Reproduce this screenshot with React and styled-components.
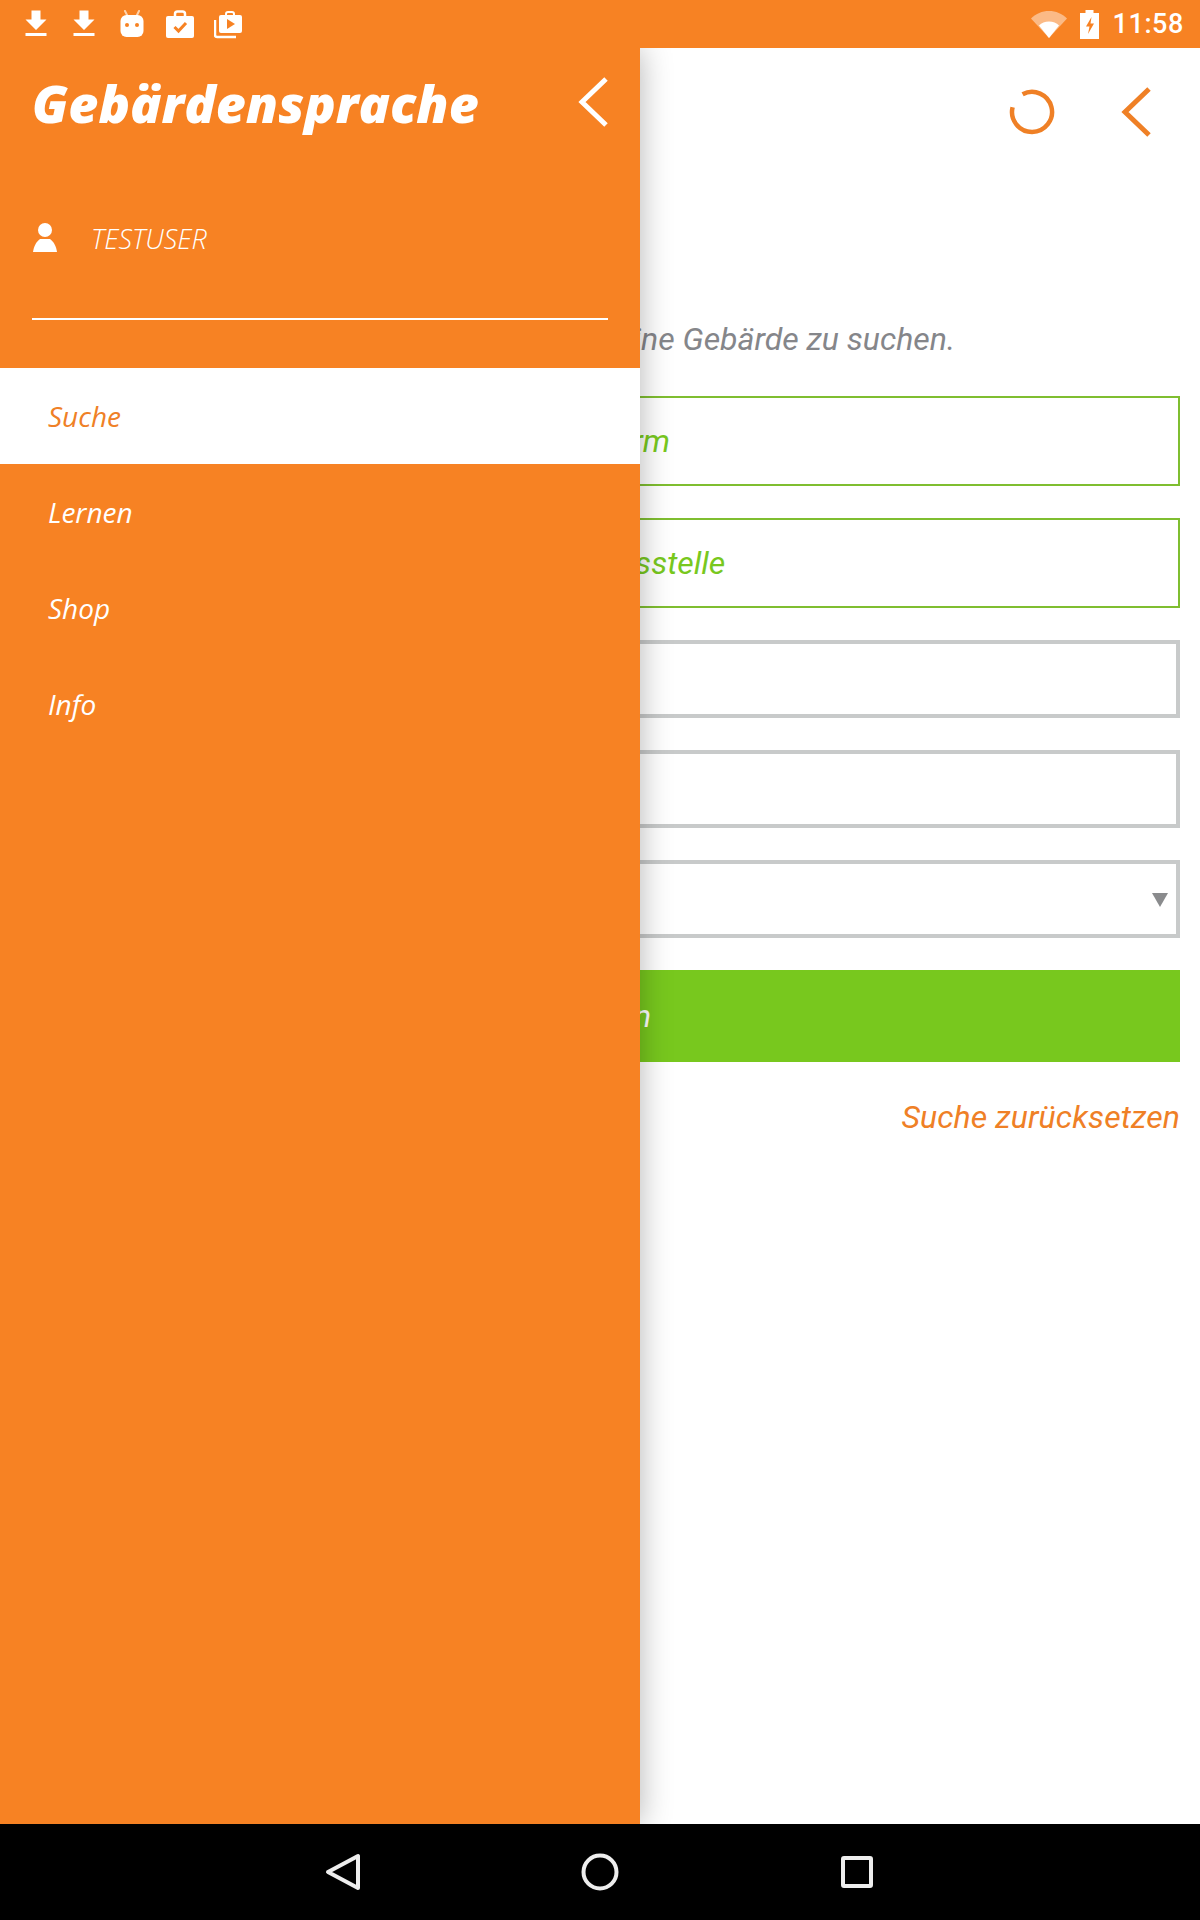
import React from "react";
import styled, { createGlobalStyle } from "styled-components";

const ORANGE = "#f78223";
const GREEN = "#78c81e";

const GlobalStyle = createGlobalStyle`
  html, body {
    margin: 0;
    padding: 0;
    background: #fff;
  }
  * {
    box-sizing: border-box;
  }
`;

const Page = styled.div`
  width: 1200px;
  height: 1920px;
  display: flex;
  flex-direction: column;
  overflow: hidden;
  font-family: "Roboto", sans-serif;
`;

const StatusBar = styled.header`
  height: 48px;
  flex: none;
  display: flex;
  align-items: center;
  justify-content: space-between;
  padding: 0 16px 0 12px;
  background: ${ORANGE};
  color: #fff;
`;

const StatusGroup = styled.div`
  display: flex;
  align-items: center;
  gap: ${(props) => props.$gap || 0}px;
`;

const StatusSlot = styled.span`
  width: 48px;
  height: 48px;
  display: flex;
  align-items: center;
  justify-content: center;
`;

const Clock = styled.span`
  font-size: 27px;
  font-weight: 500;
  letter-spacing: 0.6px;
`;

const Screen = styled.main`
  flex: 1;
  position: relative;
  overflow: hidden;
  background: #fff;
`;

const Toolbar = styled.div`
  height: 128px;
  display: flex;
  align-items: center;
  justify-content: flex-end;
  gap: 65px;
  padding-right: 49px;
`;

const Form = styled.form`
  display: flex;
  flex-direction: column;
  gap: 32px;
  padding: 145px 20px 0;
`;

const Intro = styled.p`
  margin: 0 0 7px;
  font-size: 32px;
  line-height: 36px;
  font-style: italic;
  text-align: center;
  white-space: nowrap;
  color: #85868a;
`;

const Field = styled.input`
  display: block;
  width: 100%;
  height: ${(props) => (props.$required ? "90px" : "78px")};
  border: ${(props) =>
    props.$required ? "2.5px solid #7fbe30" : "4px solid #c8caca"};
  border-radius: 0;
  outline: none;
  background: #fff;
  font-family: "Roboto", sans-serif;
  font-size: 32px;
  font-style: italic;
  text-align: center;
  color: ${GREEN};

  &::placeholder {
    color: ${GREEN};
    opacity: 1;
  }
`;

const SelectBox = styled.div`
  position: relative;
  height: 78px;
  border: 4px solid #c8caca;
  background: #fff;

  &::after {
    content: "";
    position: absolute;
    top: 29px;
    right: 8px;
    border-left: 8px solid transparent;
    border-right: 8px solid transparent;
    border-top: 14px solid #8a8b8d;
  }
`;

const SubmitButton = styled.button`
  height: 92px;
  border: none;
  background: ${GREEN};
  color: #fff;
  font-family: "Roboto", sans-serif;
  font-size: 32px;
  font-style: italic;
`;

const ResetLink = styled.a`
  margin-top: 3px;
  text-align: right;
  font-size: 32px;
  line-height: 40px;
  font-style: italic;
  letter-spacing: 0.1px;
  color: #ef8026;
`;

const Drawer = styled.aside`
  position: absolute;
  top: 0;
  left: 0;
  bottom: 0;
  width: 640px;
  background: ${ORANGE};
  box-shadow: 0 0 30px rgba(0, 0, 0, 0.3);
  font-family: "Open Sans", sans-serif;
  font-style: italic;
  color: #fff;
`;

const DrawerHead = styled.div`
  height: 112px;
  display: flex;
  align-items: center;
  justify-content: space-between;
  padding: 0 32px;
`;

const Title = styled.h1`
  margin: 0 0 2px;
  font-size: 52px;
  line-height: 60px;
  font-weight: 800;
  font-style: italic;
`;

const DrawerClose = styled.span`
  display: flex;
  margin-bottom: 5px;
`;

const UserRow = styled.div`
  height: 160px;
  margin: 0 32px;
  display: flex;
  align-items: center;
  gap: 34px;
  padding: 0 1px 2px;
  border-bottom: 2px solid #fff;
`;

const UserName = styled.span`
  font-size: 27px;
  font-weight: 300;
`;

const Menu = styled.nav`
  margin-top: 48px;
  display: flex;
  flex-direction: column;
`;

const MenuItem = styled.a`
  height: 96px;
  display: flex;
  align-items: center;
  padding-left: 48px;
  font-size: 28px;
  background: ${(props) => (props.$active ? "#fff" : "transparent")};
  color: ${(props) => (props.$active ? "#ef8026" : "#fff")};
`;

const NavBar = styled.footer`
  height: 96px;
  flex: none;
  display: flex;
  align-items: center;
  justify-content: center;
  gap: 220px;
  background: #000;
`;

const DownloadIcon = () => (
  <svg width="36" height="36" viewBox="0 0 24 24" fill="#fff">
    <path d="M19 9h-4V3H9v6H5l7 7 7-7zM5 18v2h14v-2H5z" />
  </svg>
);

const BotIcon = () => (
  <svg width="24" height="28" viewBox="0 0 24 28">
    <path d="M5 1l2.500 5M19 1l-2.500 5" stroke="#fdd3ae" strokeWidth="2" strokeLinecap="round" />
    <rect x="0.500" y="5" width="23" height="22" rx="6" fill="#fff" />
    <circle cx="7" cy="15" r="2" fill={ORANGE} />
    <circle cx="17" cy="15" r="2" fill={ORANGE} />
  </svg>
);

const TaskIcon = () => (
  <svg width="28" height="28" viewBox="0 0 28 28">
    <path d="M9 7V4a2.500 2.500 0 0 1 2.500-2.500h5A2.500 2.500 0 0 1 19 4v3" fill="none" stroke="#fff" strokeWidth="2.500" />
    <rect y="6" width="28" height="22" rx="2" fill="#fff" />
    <path d="M8.500 17l4 4 7.500-8" fill="none" stroke={ORANGE} strokeWidth="3" />
  </svg>
);

const PlayStackIcon = () => (
  <svg width="28" height="29" viewBox="0 0 28 29">
    <path d="M12 6V4a2 2 0 0 1 2-2h4a2 2 0 0 1 2 2v2" fill="none" stroke="#fff" strokeWidth="2" />
    <rect x="5" y="5" width="23" height="18" rx="2" fill="#fff" />
    <path d="M13 9l8 5-8 5z" fill={ORANGE} />
    <path d="M1 10v15a2 2 0 0 0 2 2h19" fill="none" stroke="#fff" strokeWidth="2.500" />
  </svg>
);

const WifiIcon = () => (
  <svg width="36" height="28" viewBox="0 0 36 28">
    <path d="M0 8.500C5 3.500 11 1 18 1s13 2.500 18 7.500L18 28z" fill="#fff" fillOpacity="0.45" />
    <path d="M8 15.500C10.500 13 14 11.500 18 11.500s7.500 1.500 10 4L18 28z" fill="#fff" />
  </svg>
);

const BatteryIcon = () => (
  <svg width="19" height="29" viewBox="0 0 19 29">
    <path d="M5.500 0h8v3H19v26H0V3h5.500z" fill="#fff" />
    <path d="M11.500 7l-5.500 9.500h3.500L8 24l6-10.500h-3.500z" fill={ORANGE} />
  </svg>
);

const RefreshIcon = () => (
  <svg width="48" height="48" viewBox="0 0 48 48" fill="none">
    <path d="M14.600 6.300A20 20 0 1 1 4.600 19.200" stroke="#ef8026" strokeWidth="4.500" />
  </svg>
);

const BackIcon = ({ color, strokeWidth }) => (
  <svg width="30" height="50" viewBox="0 0 30 50" fill="none">
    <path d="M28 2L4 25l24 23" stroke={color} strokeWidth={strokeWidth} />
  </svg>
);

const PersonIcon = () => (
  <svg width="24" height="30" viewBox="0 0 24 30" fill="#fff">
    <circle cx="12" cy="7" r="7" />
    <path d="M7 16h10c4 3 6 7 7 13H0c1-6 3-10 7-13z" />
  </svg>
);

const NavBack = () => (
  <svg width="36" height="38" viewBox="0 0 36 38" fill="none">
    <path d="M33 3v32L3 19z" stroke="#eee" strokeWidth="4" strokeLinejoin="round" />
  </svg>
);

const NavHome = () => (
  <svg width="38" height="38" viewBox="0 0 38 38" fill="none">
    <circle cx="19" cy="19" r="16.500" stroke="#eee" strokeWidth="4" />
  </svg>
);

const NavRecent = () => (
  <svg width="36" height="36" viewBox="0 0 36 36" fill="none">
    <rect x="4" y="4" width="28" height="28" rx="1" stroke="#eee" strokeWidth="4" />
  </svg>
);

const menuItems = ["Suche", "Lernen", "Shop", "Info"];

const App = () => {
  return (
    <Page>
      <GlobalStyle />
      <StatusBar>
        <StatusGroup>
          <StatusSlot><DownloadIcon /></StatusSlot>
          <StatusSlot><DownloadIcon /></StatusSlot>
          <StatusSlot><BotIcon /></StatusSlot>
          <StatusSlot><TaskIcon /></StatusSlot>
          <StatusSlot><PlayStackIcon /></StatusSlot>
        </StatusGroup>
        <StatusGroup $gap={13}>
          <WifiIcon />
          <BatteryIcon />
          <Clock>11:58</Clock>
        </StatusGroup>
      </StatusBar>

      <Screen>
        <Toolbar>
          <RefreshIcon />
          <BackIcon color="#ef8026" strokeWidth={5} />
        </Toolbar>

        <Form>
          <Intro>Füllen Sie ein Feld aus, um eine Gebärde zu suchen.</Intro>
          <Field $required placeholder="Handform" />
          <Field $required placeholder="Ausführungsstelle" />
          <Field />
          <Field />
          <SelectBox />
          <SubmitButton type="button">Suchen</SubmitButton>
          <ResetLink>Suche zurücksetzen</ResetLink>
        </Form>

        <Drawer>
          <DrawerHead>
            <Title>Gebärdensprache</Title>
            <DrawerClose>
              <BackIcon color="#fff" strokeWidth={5} />
            </DrawerClose>
          </DrawerHead>
          <UserRow>
            <PersonIcon />
            <UserName>TESTUSER</UserName>
          </UserRow>
          <Menu>
            {menuItems.map((item, i) => (
              <MenuItem key={item} $active={i === 0}>
                {item}
              </MenuItem>
            ))}
          </Menu>
        </Drawer>
      </Screen>

      <NavBar>
        <NavBack />
        <NavHome />
        <NavRecent />
      </NavBar>
    </Page>
  );
};

export default App;
